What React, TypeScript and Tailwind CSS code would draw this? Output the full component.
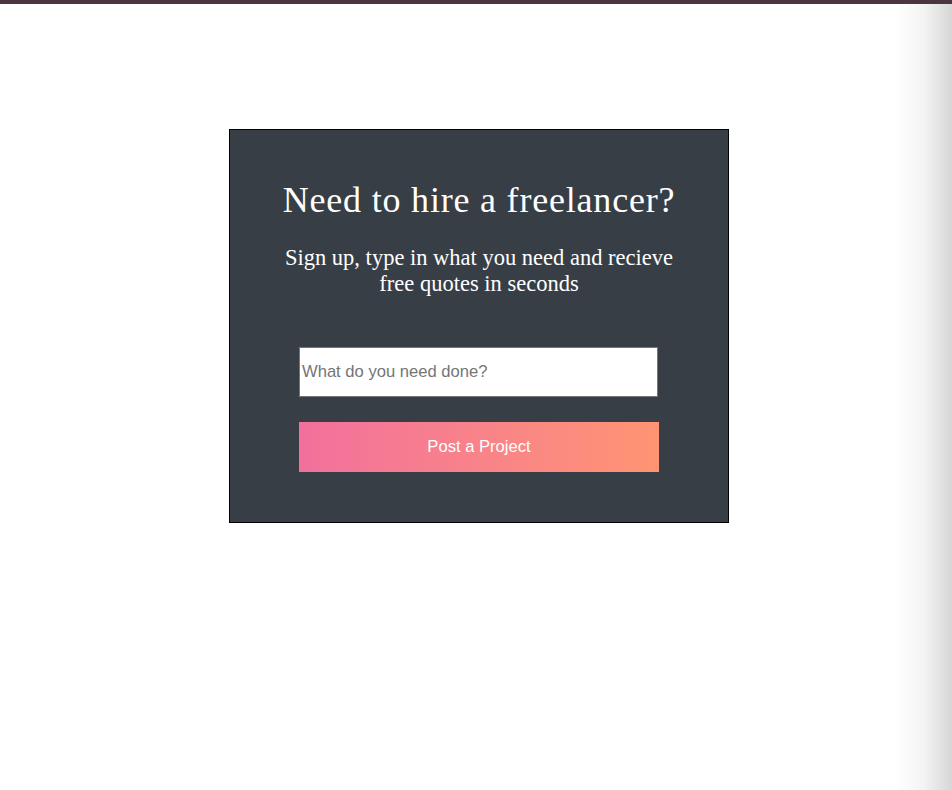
import { useState } from 'react';

export default function App() {
  const [task, setTask] = useState('');

  return (
    <div className="relative min-h-[790px] overflow-hidden bg-white">
      <div className="h-[4px] bg-[#4a3541]" />
      <div className="flex justify-center pl-[6px] pt-[125px]">
        <section className="flex w-[500px] flex-col items-center border border-black bg-[#373e46] pb-[50px] pt-[48px]">
          <h1 className="font-['Liberation_Serif',serif] text-[36px] leading-[44px] tracking-[0.8px] text-white">
            Need to hire a freelancer?
          </h1>
          <p className="mt-[23px] w-[420px] text-center font-['Liberation_Serif',serif] text-[22.5px] leading-[26px] text-white">
            Sign up, type in what you need and recieve free quotes in seconds
          </p>
          <form
            className="mt-[50px] flex w-[360px] flex-col gap-[25px]"
            onSubmit={(e) => e.preventDefault()}
          >
            <input
              type="text"
              value={task}
              onChange={(e) => setTask(e.target.value)}
              placeholder="What do you need done?"
              className="h-[50px] w-[359px] border border-[#767676] bg-white px-[2px] font-['Liberation_Sans',Arial,sans-serif] text-[16.6px] text-gray-800 outline-none placeholder:text-[#757575]"
            />
            <button
              type="submit"
              className="h-[50px] w-full bg-gradient-to-r from-[#f2709c] to-[#ff9472] font-['Liberation_Sans',Arial,sans-serif] text-[16.6px] text-white"
            >
              Post a Project
            </button>
          </form>
        </section>
      </div>
      <div className="pointer-events-none absolute bottom-0 right-0 top-[4px] w-[56px] bg-gradient-to-r from-white/0 via-[#f4f4f4] to-[#d6d6d6]" />
    </div>
  );
}
